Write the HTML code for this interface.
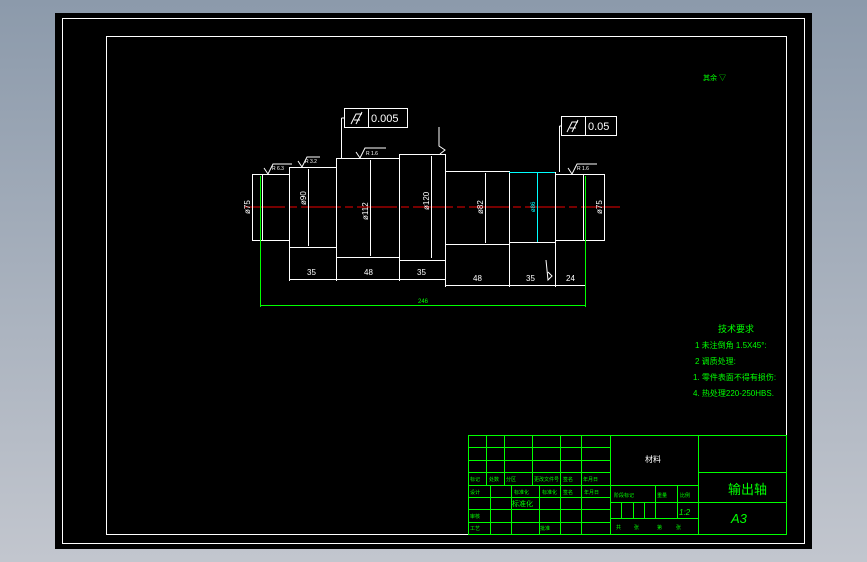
<!DOCTYPE html>
<html><head><meta charset="utf-8"><style>
html,body{margin:0;padding:0;width:867px;height:562px;overflow:hidden;background:linear-gradient(#8c9aab,#c2c6ce);}
svg{position:absolute;left:0;top:0}
text{font-family:"Liberation Sans","Noto Sans CJK SC",sans-serif;}
</style></head><body>
<svg width="867" height="562" viewBox="0 0 867 562">
<rect x="55" y="13" width="757" height="536" fill="#000"/>
<rect x="62.5" y="18.5" width="742" height="525" fill="none" stroke="#fff" stroke-width="1"/>
<rect x="106.5" y="36.5" width="680" height="498" fill="none" stroke="#fff" stroke-width="1"/>

<!-- centerline -->
<line x1="245" y1="207" x2="620" y2="207" stroke="#e00" stroke-width="1" stroke-dasharray="40,4,8,4"/>

<g fill="none" stroke="#fff" stroke-width="1">
<rect x="252.5" y="174.5" width="37" height="66"/>
<rect x="289.5" y="167.5" width="47" height="80"/>
<rect x="336.5" y="158.5" width="63" height="99"/>
<rect x="399.5" y="154.5" width="46" height="106"/>
<rect x="445.5" y="171.5" width="64" height="73"/>
<rect x="509.5" y="172.5" width="46" height="70"/>
<rect x="555.5" y="174.5" width="49" height="66"/>
<line x1="262.5" y1="174" x2="262.5" y2="240"/>
<line x1="583.5" y1="174" x2="583.5" y2="240"/>
<!-- extension lines -->
<line x1="289.5" y1="247" x2="289.5" y2="281"/>
<line x1="336.5" y1="257" x2="336.5" y2="281"/>
<line x1="399.5" y1="260" x2="399.5" y2="281"/>
<line x1="445.5" y1="260" x2="445.5" y2="287"/>
<line x1="509.5" y1="244" x2="509.5" y2="287"/>
<line x1="555.5" y1="242" x2="555.5" y2="287"/>
<line x1="289" y1="279.5" x2="445" y2="279.5"/>
<line x1="445" y1="285.5" x2="585" y2="285.5"/>
<!-- diameter dims -->
<line x1="308.5" y1="169" x2="308.5" y2="246"/>
<line x1="370.5" y1="160" x2="370.5" y2="256"/>
<line x1="431.5" y1="156" x2="431.5" y2="258"/>
<line x1="485.5" y1="173" x2="485.5" y2="243"/>
<!-- tolerance boxes -->
<rect x="344.5" y="108.5" width="63" height="19"/>
<line x1="368.5" y1="108" x2="368.5" y2="127"/>
<rect x="561.5" y="116.5" width="55" height="19"/>
<line x1="585.5" y1="116" x2="585.5" y2="135"/>
<line x1="341.5" y1="118" x2="344" y2="118"/><line x1="341.5" y1="118" x2="341.5" y2="158"/>
<line x1="559.5" y1="126" x2="561" y2="126"/><line x1="559.5" y1="126" x2="559.5" y2="172"/>
<path d="M351 124 L356 114 L362 114 M354 120 L360 120 M356 124 L362 112"/>
<path d="M567 132 L572 122 L578 122 M570 128 L576 128 M572 132 L578 120"/>
<!-- roughness -->
<path d="M264 168 L268 174 L273 164 L292 164"/>
<path d="M298 161 L302 167 L307 157 L320 157"/>
<path d="M356 152 L360 158 L365 148 L386 148"/>
<path d="M568 168 L572 174 L577 164 L597 164"/>
<path d="M440 154 L445 150 L439 146 L439 127"/>
<path d="M548 272 L552 276 L548 280 L546 260"/>
</g>
<line x1="537.5" y1="172" x2="537.5" y2="242" stroke="#0ff"/>
<line x1="509" y1="172.5" x2="555" y2="172.5" stroke="#0ff"/>
<g fill="#fff" font-size="9">
<text x="351" y="122" font-size="1">.</text>
<text x="371" y="122" font-size="11">0.005</text>
<text x="588" y="130" font-size="11">0.05</text>
<text x="307" y="275" font-size="8">35</text>
<text x="364" y="275" font-size="8">48</text>
<text x="417" y="275" font-size="8">35</text>
<text x="473" y="281" font-size="8">48</text>
<text x="526" y="281" font-size="8">35</text>
<text x="566" y="281" font-size="8">24</text>
<text x="272" y="170" font-size="5">R 6.3</text>
<text x="305" y="163" font-size="5">R 3.2</text>
<text x="366" y="155" font-size="5">R 1.6</text>
<text x="577" y="170" font-size="5">R 1.6</text>
<text transform="translate(250,214) rotate(-90)" font-size="8">ø75</text>
<text transform="translate(306,205) rotate(-90)" font-size="8">ø90</text>
<text transform="translate(368,220) rotate(-90)" font-size="8">ø112</text>
<text transform="translate(429,210) rotate(-90)" font-size="8">ø120</text>
<text transform="translate(483,214) rotate(-90)" font-size="8">ø82</text>
<text transform="translate(602,214) rotate(-90)" font-size="8">ø75</text>
</g>
<text transform="translate(535,212) rotate(-90)" fill="#0ff" font-size="6">ø86</text>
<g stroke="#0f0" stroke-width="1">
<line x1="260.5" y1="176" x2="260.5" y2="307"/>
<line x1="585.5" y1="176" x2="585.5" y2="307"/>
<line x1="260" y1="305.5" x2="585" y2="305.5"/>
</g>
<text x="418" y="303" fill="#0f0" font-size="6">246</text>

<g fill="#0f0" font-family="Liberation Sans,Noto Sans CJK SC,sans-serif">
<text x="703" y="80" font-size="7">其余 ▽</text>
<text x="718" y="332" font-size="9">技术要求</text>
<text x="695" y="348" font-size="8">1 未注倒角 1.5X45°:</text>
<text x="695" y="364" font-size="8">2 调质处理:</text>
<text x="693" y="380" font-size="8">1. 零件表面不得有损伤:</text>
<text x="693" y="396" font-size="8">4. 热处理220-250HBS.</text>
<text x="728" y="494" font-size="13">输出轴</text>
<text x="731" y="523" font-size="13" font-style="italic">A3</text>
<text x="679" y="515" font-size="8" font-style="italic">1:2</text>
</g>
<text x="645" y="462" fill="#fff" font-size="8">材料</text>

<!-- title block -->
<g stroke="#0f0" stroke-width="1" fill="none">
<rect x="468.5" y="435.5" width="318" height="99"/>
<line x1="610.5" y1="435" x2="610.5" y2="534"/>
<line x1="698.5" y1="435" x2="698.5" y2="534"/>
<line x1="698" y1="472.5" x2="786" y2="472.5"/>
<line x1="698" y1="502.5" x2="786" y2="502.5"/>
<line x1="610" y1="485.5" x2="698" y2="485.5"/>
<line x1="610" y1="502.5" x2="698" y2="502.5"/>
<line x1="610" y1="518.5" x2="698" y2="518.5"/>
<line x1="621.5" y1="502" x2="621.5" y2="518"/>
<line x1="633.5" y1="502" x2="633.5" y2="518"/>
<line x1="644.5" y1="502" x2="644.5" y2="518"/>
<line x1="655.5" y1="485" x2="655.5" y2="518"/>
<line x1="677.5" y1="485" x2="677.5" y2="518"/>
<line x1="468" y1="447.5" x2="610" y2="447.5"/>
<line x1="468" y1="460.5" x2="610" y2="460.5"/>
<line x1="468" y1="472.5" x2="610" y2="472.5"/>
<line x1="468" y1="485.5" x2="610" y2="485.5"/>
<line x1="468" y1="497.5" x2="610" y2="497.5"/>
<line x1="468" y1="509.5" x2="610" y2="509.5"/>
<line x1="468" y1="522.5" x2="610" y2="522.5"/>
<line x1="486.5" y1="435" x2="486.5" y2="485"/>
<line x1="504.5" y1="435" x2="504.5" y2="485"/>
<line x1="532.5" y1="435" x2="532.5" y2="485"/>
<line x1="560.5" y1="435" x2="560.5" y2="485"/>
<line x1="581.5" y1="435" x2="581.5" y2="485"/>
<line x1="490.5" y1="485" x2="490.5" y2="534"/>
<line x1="511.5" y1="485" x2="511.5" y2="534"/>
<line x1="539.5" y1="485" x2="539.5" y2="534"/>
<line x1="560.5" y1="485" x2="560.5" y2="534"/>
<line x1="581.5" y1="485" x2="581.5" y2="534"/>
</g>
<g fill="#0f0" font-size="5">
<text x="470" y="481">标记</text><text x="489" y="481">处数</text><text x="506" y="481">分区</text><text x="534" y="481">更改文件号</text><text x="563" y="481">签名</text><text x="583" y="481">年月日</text>
<text x="470" y="494">设计</text><text x="514" y="494">标准化</text><text x="542" y="494">标准化</text><text x="563" y="494">签名</text><text x="584" y="494">年月日</text>
<text x="512" y="506" font-size="7">标准化</text>
<text x="470" y="518">审核</text><text x="470" y="530">工艺</text><text x="540" y="530">批准</text>
<text x="614" y="497">阶段标记</text><text x="657" y="497">重量</text><text x="680" y="497">比例</text>
<text x="616" y="529">共</text><text x="634" y="529">张</text><text x="657" y="529">第</text><text x="676" y="529">张</text>
</g>
</svg>
</body></html>
